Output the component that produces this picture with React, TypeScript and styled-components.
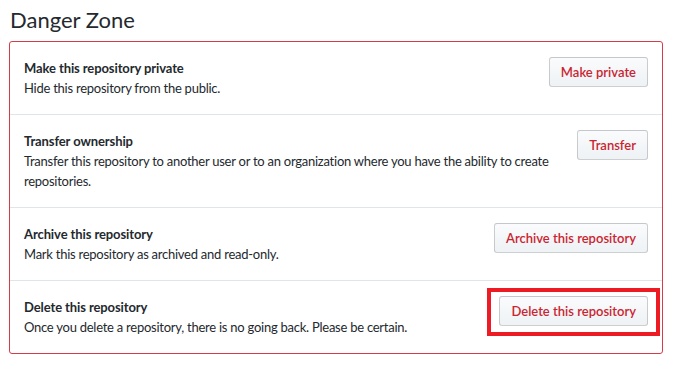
import React from "react";
import styled, { createGlobalStyle } from "styled-components";

const GlobalStyle = createGlobalStyle`
  body {
    margin: 0;
    background: #fff;
    font-family: Lato, "Liberation Sans", sans-serif;
    color: #24292e;
  }
`;

const Page = styled.div`
  padding: 5px 0 0 9px;
  width: 654px;
`;

const Heading = styled.h2`
  margin: 0 0 7px 1px;
  font-size: 22px;
  font-weight: 400;
  line-height: 29px;
`;

const Box = styled.div`
  border: 1px solid #d73a49;
  border-radius: 3px;
`;

const Row = styled.div`
  display: flex;
  align-items: flex-start;
  justify-content: space-between;
  gap: 12px;
  padding: 16px 14px 16px 14px;
  & + & {
    border-top: 1px solid #e1e4e8;
  }
`;

const Text = styled.div`
  flex: 1;
  font-size: 13px;
  line-height: 20px;
`;

const Title = styled.div`
  font-weight: 700;
  letter-spacing: -0.1px;
`;

const Desc = styled.p`
  margin: 0;
  letter-spacing: -0.25px;
`;

const Button = styled.button`
  flex: none;
  margin-top: -1px;
  font-family: inherit;
  font-size: 13px;
  font-weight: 600;
  line-height: 20px;
  padding: 4px 11px;
  color: #cb2431;
  background: linear-gradient(#fafbfc, #eff3f6 90%);
  border: 1px solid rgba(27, 31, 35, 0.2);
  border-radius: 3px;
  cursor: pointer;
`;

const Highlight = styled.span`
  position: relative;
  display: inline-flex;
  &::after {
    content: "";
    position: absolute;
    inset: -9px -12px -10px -12px;
    border: 4px solid #ed1c24;
    pointer-events: none;
  }
`;

const rows = [
  { title: "Make this repository private", desc: "Hide this repository from the public.", action: "Make private" },
  {
    title: "Transfer ownership",
    desc: "Transfer this repository to another user or to an organization where you have the ability to create repositories.",
    action: "Transfer",
  },
  { title: "Archive this repository", desc: "Mark this repository as archived and read-only.", action: "Archive this repository" },
];

export default function App() {
  return (
    <Page>
      <GlobalStyle />
      <Heading>Danger Zone</Heading>
      <Box>
        {rows.map((r) => (
          <Row key={r.title}>
            <Text>
              <Title>{r.title}</Title>
              <Desc>{r.desc}</Desc>
            </Text>
            <Button>{r.action}</Button>
          </Row>
        ))}
        <Row>
          <Text>
            <Title>Delete this repository</Title>
            <Desc>Once you delete a repository, there is no going back. Please be certain.</Desc>
          </Text>
          <Highlight>
            <Button>Delete this repository</Button>
          </Highlight>
        </Row>
      </Box>
    </Page>
  );
}
